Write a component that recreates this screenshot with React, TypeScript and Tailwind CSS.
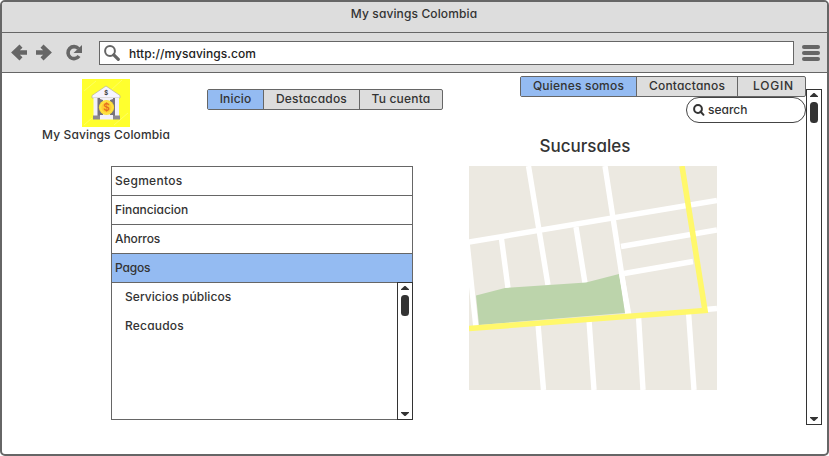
import React from "react";

type Tab = { label: string; width: string; active?: boolean; spacing: string };

function TabBar({ tabs }: { tabs: Tab[] }) {
  return (
    <nav className="flex h-[21px] w-fit divide-x divide-[#666] rounded-[2px] border border-[#666] bg-[#ddd]">
      {tabs.map((t) => (
        <div
          key={t.label}
          className={`flex items-center justify-center pb-[2px] ${t.width} ${t.spacing} ${t.active ? "bg-[#94bbf2]" : ""}`}
        >
          {t.label}
        </div>
      ))}
    </nav>
  );
}

function ScrollBar({ className }: { className: string }) {
  return (
    <div className={`flex w-4 shrink-0 flex-col items-center border border-[#333] bg-white pt-[3px] pb-[3px] ${className}`}>
      <svg className="h-[4px] w-[8px]" viewBox="0 0 8 4">
        <path d="M0 4V3.200L3.500 0h1L8 3.200V4z" fill="#333" />
      </svg>
      <div className="mt-[5px] h-[21px] w-2 rounded-[3.5px] bg-[#333]" />
      <svg className="mt-auto h-[4px] w-[8px]" viewBox="0 0 8 4">
        <path d="M0 0h8v.8L4.500 4h-1L0 .8z" fill="#333" />
      </svg>
    </div>
  );
}

function Logo() {
  return (
    <svg className="h-12 w-12" viewBox="0 0 48 48">
      <path d="M0 0h48v48H0z" fill="#ffff2e" />
      <path d="M2 12L14 2M28 12L40 1M32 46L46 34M2 46l8-7" stroke="#ffff85" strokeWidth=".6" />
      <path d="M24 7L38 16.500v2.500H10v-2.500z" fill="#f6f4ff" stroke="#b5b29c" strokeWidth=".7" />
      <path d="M12 19h25v18H12z" fill="#77727a" />
      <path d="M11.500 19h4v18h-4zM18 19h13v18H18zM33 19h4v18h-4z" fill="#f2f0fa" />
      <path d="M18 20l3 1v15h-3zM31 20l-3 1v15h3z" fill="#77727a" />
      <path d="M11 36.500h7v4h-7zM31 36.500h7v4h-7z" fill="#8d8990" />
      <path d="M18 36h13v4.500H18z" fill="#f3f1fc" />
      <circle cx="24.500" cy="28.500" r="7.600" fill="#fde035" />
      <circle cx="24.500" cy="28.500" r="5.700" fill="#ffd030" stroke="#ffe952" strokeWidth=".8" />
      <text x="24.500" y="32" textAnchor="middle" fontSize="10" fontWeight="600" fill="#e46e20">$</text>
      <text x="24.200" y="15.500" textAnchor="middle" fontSize="6" fontWeight="700" fill="#333">$</text>
    </svg>
  );
}

function StreetMap() {
  return (
    <svg className="mt-[10px] h-[224px] w-[248px]" viewBox="0 0 248 224">
      <path d="M0 0h248v224H0z" fill="#ece9e1" />
      <g fill="none" stroke="#fff" strokeWidth="5.400">
        <path d="M0 76L248 34.500" />
        <path d="M59.500 0L79 119M136 0L159 149M32.500 73L39 122M107 61L116 117" />
        <path d="M152 80.500L248 64M155 107.500L224 95.500M236 143.500L248 142.500" />
        <path d="M-2 76L7 162" />
        <path d="M69 158L74.500 224M120 154L125 224M169.500 150L174 224M219.500 146L225 224" />
      </g>
      <path d="M7 129.500L36 122L117 116.500L150 108L156 147L10 159z" fill="#bcd4ab" />
      <path d="M152.500 108L160 149" stroke="#fff" strokeWidth="5" />
      <path d="M0 162.500L236 144.500L213 0" fill="none" stroke="#fff86b" strokeWidth="5.600" />
    </svg>
  );
}

const sections = [
  { label: "Segmentos", spacing: "tracking-[0.3px]" },
  { label: "Financiacion", spacing: "tracking-[-0.05px]" },
  { label: "Ahorros", spacing: "tracking-[-0.1px]" },
  { label: "Pagos", spacing: "tracking-[-0.2px]", active: true },
];

export default function App() {
  return (
    <div className="flex h-[456px] w-[829px] flex-col overflow-hidden rounded-[5px] border-2 border-[#666] bg-white font-['Inter','Liberation_Sans',sans-serif] text-[12px] leading-4 font-medium whitespace-nowrap text-[#333] [font-feature-settings:'cv11']">
      <header className="h-[31px] border-b border-[#666] bg-[#ddd] pt-1 pr-px text-center tracking-[0.12px]">My savings Colombia</header>
      <div className="flex h-10 items-center border-b border-[#666] bg-[#ddd] pl-2">
        <svg className="h-[17px] w-[74px]" viewBox="0 0 74 17" fill="none" stroke="#666" strokeWidth="4.400">
          <path d="M17 8.500H4M11 2.200L4.300 8.500l6.700 6.300M26 8.500h13M32 2.200l6.700 6.300l-6.700 6.300" />
          <path d="M68.500 4.600A6 6 0 1 0 69 12" strokeWidth="3.600" />
          <path d="M72 1v8h-8.500z" fill="#666" stroke="none" />
        </svg>
        <div className="ml-[15px] flex h-6 w-[695px] items-center border border-[#666] bg-white pl-1">
          <svg className="h-4 w-4" viewBox="0 0 16 16" fill="none" stroke="#666">
            <circle cx="6" cy="6" r="4.900" strokeWidth="2" />
            <path d="M9.800 9.800l4.500 4.500" strokeWidth="3.200" strokeLinecap="round" />
          </svg>
          <span className="mt-[2px] ml-[9px] tracking-[0.06px] text-[#222]">http://mysavings.com</span>
        </div>
        <div className="ml-2 flex flex-col gap-[2px]">
          <i className="h-1 w-[18px] rounded-sm bg-[#666]" />
          <i className="h-1 w-[18px] rounded-sm bg-[#666]" />
          <i className="h-1 w-[18px] rounded-sm bg-[#666]" />
        </div>
      </div>
      <main className="flex flex-1">
        <div className="w-[467px] shrink-0">
          <div className="flex h-[93px]">
            <div className="ml-9 flex w-[136px] flex-col items-center pt-[6px]">
              <Logo />
              <span className="tracking-[0.14px]">My Savings Colombia</span>
            </div>
            <div className="ml-[33px] pt-4">
              <TabBar
                tabs={[
                  { label: "Inicio", width: "w-[56px]", spacing: "tracking-[0.15px]", active: true },
                  { label: "Destacados", width: "w-[96px]", spacing: "tracking-[0.2px]" },
                  { label: "Tu cuenta", width: "w-[82px]", spacing: "tracking-[0.2px]" },
                ]}
              />
            </div>
          </div>
          <div className="ml-[109px] flex h-[254px] w-[302px] flex-col border border-[#666]">
            {sections.map((s) => (
              <div key={s.label} className={`h-[29px] shrink-0 border-b border-[#666] pt-[6px] pl-[3px] ${s.spacing} ${s.active ? "bg-[#94bbf2]" : ""}`}>
                {s.label}
              </div>
            ))}
            <div className="-mt-px -mr-px -mb-px flex flex-1">
              <div className="flex flex-1 flex-col gap-[13px] pt-[7px] pl-[13px]">
                <span className="tracking-[0.06px]">Servicios públicos</span>
                <span className="tracking-[0.2px]">Recaudos</span>
              </div>
              <ScrollBar className="h-full" />
            </div>
          </div>
        </div>
        <div className="w-[337px] shrink-0 pt-[3px]">
          <div className="flex flex-col items-end">
            <TabBar
              tabs={[
                { label: "Quienes somos", width: "w-[116px]", spacing: "tracking-[0.2px]", active: true },
                { label: "Contactanos", width: "w-[101px]", spacing: "tracking-[0.2px]" },
                { label: "LOGIN", width: "w-[67px] pl-1", spacing: "tracking-[0.8px]" },
              ]}
            />
            <div className="flex h-[26px] w-[120px] items-center rounded-[13px] border border-[#444] bg-white pl-[6px]">
              <svg className="h-3 w-3" viewBox="0 0 12 12" fill="none" stroke="#333" strokeWidth="2">
                <circle cx="5" cy="5" r="3.900" />
                <path d="M7.500 7.500l3 3.300" strokeLinecap="round" />
              </svg>
              <span className="ml-[3px]">search</span>
            </div>
          </div>
          <h1 className="mt-3 ml-[70px] h-[21px] w-[92px] text-center text-[17px] leading-[22px] font-medium">Sucursales</h1>
          <StreetMap />
        </div>
        <ScrollBar className="mt-4 h-[336px]" />
      </main>
    </div>
  );
}
